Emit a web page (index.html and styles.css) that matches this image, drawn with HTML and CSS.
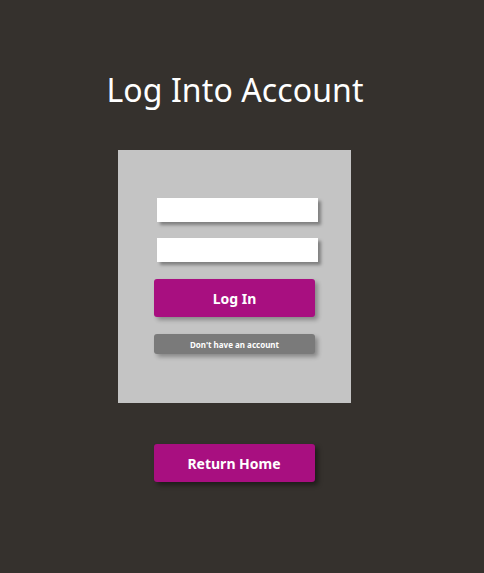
FILE: index.html
```html
<!DOCTYPE html>
<html>
<head>
<meta charset="utf-8">
<link rel="stylesheet" href="styles.css">
</head>
<body>
<main class="page">
  <h1 class="title">Log Into Account</h1>
  <form class="card">
    <div class="fields">
      <input class="field" type="text">
      <input class="field" type="password">
    </div>
    <button class="btn btn-primary" type="button">Log In</button>
    <button class="btn btn-secondary" type="button">Don't have an account</button>
  </form>
  <button class="btn btn-primary btn-home" type="button">Return Home</button>
</main>
</body>
</html>
```
FILE: styles.css
```css
html, body {
  margin: 0;
  padding: 0;
  background: #35312d;
  height: 100%;
}
body {
  font-family: "Noto Sans", "Open Sans", sans-serif;
}
.page {
  width: 470px;
  display: flex;
  flex-direction: column;
  align-items: center;
}
.title {
  margin: 68px 0 0;
  height: 44px;
  line-height: 44px;
  font-size: 32px;
  font-weight: 400;
  color: #ffffff;
  letter-spacing: 0.1px;
}
.card {
  margin-top: 38px;
  margin-left: -1px;
  width: 233px;
  height: 253px;
  background: #c4c4c4;
  box-sizing: border-box;
  padding-top: 48px;
  display: flex;
  flex-direction: column;
  align-items: center;
}
.fields {
  display: flex;
  flex-direction: column;
  gap: 16px;
  margin-left: 5px;
}
.field {
  width: 161px;
  height: 24px;
  box-sizing: border-box;
  border: none;
  background: #ffffff;
  box-shadow: 3px 3px 3px rgba(0, 0, 0, 0.35);
  margin: 0;
  padding: 0;
  outline: none;
}
.btn {
  width: 161px;
  border: none;
  border-radius: 3px;
  color: #ffffff;
  font-family: "Noto Sans", "Open Sans", sans-serif;
  font-weight: 700;
  padding: 0;
  cursor: pointer;
  box-shadow: 3px 3px 4px rgba(0, 0, 0, 0.3);
}
.btn-primary {
  height: 38px;
  background: #a80f80;
  font-size: 14px;
}
.card .btn-primary {
  margin-top: 17px;
}
.btn-secondary {
  margin-top: 17px;
  height: 20px;
  background: #7a7a7a;
  font-size: 8px;
}
.btn-home {
  margin-top: 41px;
  margin-left: -1px;
  margin-right: 1px;
  box-shadow: 3px 3px 5px rgba(0, 0, 0, 0.45);
}
```
